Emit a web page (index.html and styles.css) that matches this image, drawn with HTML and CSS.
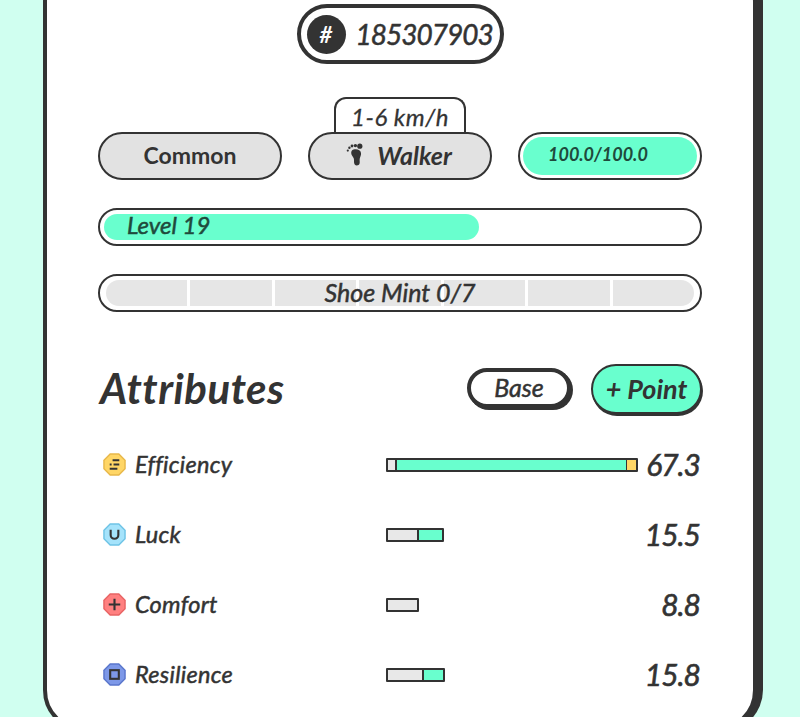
FILE: index.html
```html
<!DOCTYPE html>
<html lang="en">
<head>
    <meta charset="UTF-8">
    <meta name="viewport" content="width=device-width, initial-scale=1.0">
    <title>Shoe Details</title>
    <link rel="stylesheet" href="styles.css">
</head>
<body>
    <div class="card">
        <!-- Shoe id -->
        <div class="id-row">
            <div class="id-pill">
                <span class="id-hash">#</span>
                <span class="id-number">185307903</span>
            </div>
        </div>

        <!-- Quality, type, durability -->
        <div class="pill-row">
            <div class="pill pill-quality">Common</div>
            <div class="pill pill-type">
                <div class="speed-tab">1-6 km/h</div>
                <svg class="foot-icon" viewBox="0 0 18 24" width="18" height="24">
                    <path d="M7.5 6.5c3.8-.8 7 .4 7.5 3.4.4 2.3-1 3.7-1.3 6-.3 2 .4 3-.2 4.8-.6 1.9-3.6 2.4-4.8.7-1.3-1.8-.2-4.2-1-6.2-.7-1.8-2.5-3.1-2.5-5.2 0-1.8.7-3.1 2.3-3.5z"/>
                    <circle cx="13.8" cy="3.2" r="2.6"/>
                    <circle cx="9.4" cy="2.6" r="1.7"/>
                    <circle cx="6" cy="3" r="1.4"/>
                    <circle cx="3.4" cy="4.8" r="1.2"/>
                    <circle cx="1.8" cy="7.6" r="1.1"/>
                </svg>
                <span>Walker</span>
            </div>
            <div class="pill pill-durability">
                <div class="durability-fill">100.0/100.0</div>
            </div>
        </div>

        <!-- Level -->
        <div class="track">
            <div class="level-fill" style="width: 63.4%">Level 19</div>
        </div>

        <!-- Mint count -->
        <div class="track track-mint">
            <div class="mint-segments">
                <span></span><span></span><span></span><span></span><span></span><span></span><span></span>
            </div>
            <div class="mint-label">Shoe Mint 0/7</div>
        </div>

        <!-- Attributes -->
        <div class="attr-header">
            <h2>Attributes</h2>
            <button class="btn-base">Base</button>
            <button class="btn-point">+ Point</button>
        </div>

        <div class="attr-row">
            <div class="attr-name">
                <svg class="attr-icon" viewBox="0 0 24 24" width="23" height="23">
                    <polygon class="oct" points="7.5,1 16.5,1 23,7.5 23,16.5 16.5,23 7.5,23 1,16.5 1,7.5" fill="#ffd666" stroke="#e8b84a"/>
                    <path class="glyph" d="M10 7.5h7M7 12h2M11 12h6M7 16.5h8" stroke-width="2"/>
                </svg>
                Efficiency
            </div>
            <div class="bar" style="width: 252px">
                <span class="bar-base" style="width: 9px"></span>
                <span class="bar-add"></span>
                <span class="bar-gem" style="width: 10px"></span>
            </div>
            <div class="attr-value">67.3</div>
        </div>

        <div class="attr-row">
            <div class="attr-name">
                <svg class="attr-icon" viewBox="0 0 24 24" width="23" height="23">
                    <polygon class="oct" points="7.5,1 16.5,1 23,7.5 23,16.5 16.5,23 7.5,23 1,16.5 1,7.5" fill="#a5e3fb" stroke="#6fc4e6"/>
                    <path class="glyph" d="M8 7v5.5a4 4 0 0 0 8 0V7" stroke-width="2.2"/>
                </svg>
                Luck
            </div>
            <div class="bar" style="width: 58px">
                <span class="bar-base" style="width: 31px"></span>
                <span class="bar-add"></span>
            </div>
            <div class="attr-value">15.5</div>
        </div>

        <div class="attr-row">
            <div class="attr-name">
                <svg class="attr-icon" viewBox="0 0 24 24" width="23" height="23">
                    <polygon class="oct" points="7.5,1 16.5,1 23,7.5 23,16.5 16.5,23 7.5,23 1,16.5 1,7.5" fill="#ff8080" stroke="#e86464"/>
                    <path class="glyph" d="M12 6v12M6 12h12" stroke-width="2.2"/>
                </svg>
                Comfort
            </div>
            <div class="bar" style="width: 33px">
                <span class="bar-base" style="width: 100%"></span>
            </div>
            <div class="attr-value">8.8</div>
        </div>

        <div class="attr-row">
            <div class="attr-name">
                <svg class="attr-icon" viewBox="0 0 24 24" width="23" height="23">
                    <polygon class="oct" points="7.5,1 16.5,1 23,7.5 23,16.5 16.5,23 7.5,23 1,16.5 1,7.5" fill="#7d98e8" stroke="#5a76cc"/>
                    <rect class="glyph" x="7.5" y="7.5" width="9" height="9" stroke-width="2.2"/>
                </svg>
                Resilience
            </div>
            <div class="bar" style="width: 59px">
                <span class="bar-base" style="width: 36px"></span>
                <span class="bar-add"></span>
            </div>
            <div class="attr-value">15.8</div>
        </div>
    </div>
</body>
</html>
```

FILE: styles.css
```css
html, body {
    height: 717px;
    overflow: hidden;
}
body {
    margin: 0;
    padding: 0;
    background-color: #d0fff0;
    font-family: "Lato", "Open Sans", sans-serif;
    color: #333;
}
.card {
    box-sizing: border-box;
    width: 714px;
    height: 772px;
    margin: -40px 0 0 43px;
    padding: 40px 51px 0;
    background-color: white;
    border: 4px solid #333;
    border-radius: 42px;
    box-shadow: 6px 0 0 #333;
}

/* id */
.id-row {
    display: flex;
    justify-content: center;
    margin-bottom: 68px;
}
.id-pill {
    box-sizing: border-box;
    width: 207px;
    height: 60px;
    display: flex;
    align-items: center;
    gap: 10px;
    padding-left: 6px;
    border: 4px solid #333;
    border-radius: 30px;
}
.id-hash {
    width: 39px;
    height: 39px;
    border-radius: 50%;
    background-color: #333;
    color: white;
    font-size: 22px;
    font-weight: 700;
    font-style: italic;
    display: flex;
    align-items: center;
    justify-content: center;
}
.id-number {
    font-size: 28px;
    font-style: italic;
    letter-spacing: -1px;
    -webkit-text-stroke: 0.5px #333;
}

/* pills */
.pill-row {
    display: flex;
    justify-content: space-between;
    margin-bottom: 28px;
}
.pill {
    box-sizing: border-box;
    width: 184px;
    height: 48px;
    display: flex;
    align-items: center;
    justify-content: center;
    border: 2px solid #333;
    border-radius: 24px;
    background-color: #e2e2e2;
    font-size: 25px;
    font-weight: 700;
    font-style: italic;
}
.pill-quality {
    font-size: 23px;
    font-style: normal;
    padding-bottom: 2px;
}
.pill-type {
    position: relative;
    gap: 13px;
    padding: 0 2px 2px 0;
}
.foot-icon {
    fill: #333;
    flex: none;
}
.speed-tab {
    position: absolute;
    left: 24px;
    top: -37px;
    box-sizing: border-box;
    width: 132px;
    height: 35px;
    border: 2px solid #333;
    border-bottom: none;
    border-radius: 12px 12px 0 0;
    background-color: white;
    text-align: center;
    font-size: 24px;
    font-weight: 400;
    letter-spacing: 0.5px;
    line-height: 36px;
    -webkit-text-stroke: 0.3px #333;
}
.pill-durability {
    padding: 3px;
    background-color: white;
}
.durability-fill {
    box-sizing: border-box;
    width: 100%;
    height: 100%;
    border-radius: 20px;
    padding-left: 25px;
    background-color: #69ffce;
    font-size: 18px;
    line-height: 35px;
    color: #1f4a3c;
}

/* tracks */
.track {
    box-sizing: border-box;
    position: relative;
    height: 38px;
    margin-bottom: 28px;
    padding: 4px;
    border: 2px solid #333;
    border-radius: 19px;
}
.level-fill {
    box-sizing: border-box;
    height: 100%;
    padding-left: 23px;
    border-radius: 14px;
    background-color: #69ffce;
    font-size: 24px;
    font-style: italic;
    line-height: 22px;
    color: #1f4a3c;
    -webkit-text-stroke: 0.5px #1f4a3c;
}
.track-mint {
    margin-bottom: 52px;
}
.mint-segments {
    height: 100%;
    display: flex;
    gap: 3px;
    padding: 0 2px;
}
.mint-segments span {
    flex: 1;
    background-color: #e6e6e6;
}
.mint-segments span:first-child {
    border-radius: 13px 0 0 13px;
}
.mint-segments span:last-child {
    border-radius: 0 13px 13px 0;
}
.mint-label {
    position: absolute;
    inset: 0;
    text-align: center;
    font-size: 25px;
    font-style: italic;
    line-height: 32px;
    -webkit-text-stroke: 0.5px #333;
}

/* attributes */
.attr-header {
    display: flex;
    align-items: center;
    height: 52px;
    margin-bottom: 14px;
}
.attr-header h2 {
    flex: 1;
    margin: 0 0 4px 2px;
    font-size: 42px;
    font-weight: 700;
    font-style: italic;
    letter-spacing: 0.5px;
}
.attr-header button {
    box-sizing: border-box;
    font-family: inherit;
    font-style: italic;
    color: #333;
    cursor: pointer;
}
.btn-base {
    width: 104px;
    height: 40px;
    margin: 0 20px 4px 0;
    padding: 0 0 9px;
    border: 4px solid #333;
    border-radius: 20px;
    background-color: white;
    box-shadow: 2px 2px 0 #333;
    font-size: 25px;
    -webkit-text-stroke: 0.5px #333;
}
.btn-point {
    width: 111px;
    height: 50px;
    margin: 0 0 2px 0;
    padding: 0 0 2px;
    border: 2px solid #333;
    border-radius: 25px;
    background-color: #69ffce;
    box-shadow: 1px 2px 0 #333;
    font-size: 27px;
    font-weight: 700;
}
.attr-row {
    display: flex;
    align-items: center;
    height: 70px;
}
.attr-name {
    width: 288px;
    flex: none;
    display: flex;
    align-items: center;
    gap: 9px;
    padding: 0 0 2px 5px;
    box-sizing: border-box;
    font-size: 23.5px;
    font-style: italic;
    letter-spacing: 0.3px;
    line-height: 26px;
    -webkit-text-stroke: 0.5px #333;
}
.attr-icon {
    flex: none;
    margin-top: 1px;
}
.oct {
    stroke-width: 1.5;
}
.glyph {
    fill: none;
    stroke: #333;
}
.bar {
    box-sizing: border-box;
    height: 14px;
    display: flex;
    border: 2px solid #333;
    border-radius: 1px;
    background-color: #69ffce;
}
.bar span {
    display: block;
    box-sizing: border-box;
}
.bar-base {
    background-color: #e8e8e8;
    border-right: 2px solid #333;
}
.bar .bar-base:only-child {
    border-right: none;
}
.bar-add {
    flex: 1;
    background-color: #69ffce;
}
.bar-gem {
    background-color: #ffd666;
    border-left: 1px solid #333;
}
.attr-value {
    flex: 1;
    padding: 0 2px 2px 0;
    text-align: right;
    font-size: 30px;
    font-style: italic;
    letter-spacing: -1px;
    -webkit-text-stroke: 0.6px #333;
}
```
